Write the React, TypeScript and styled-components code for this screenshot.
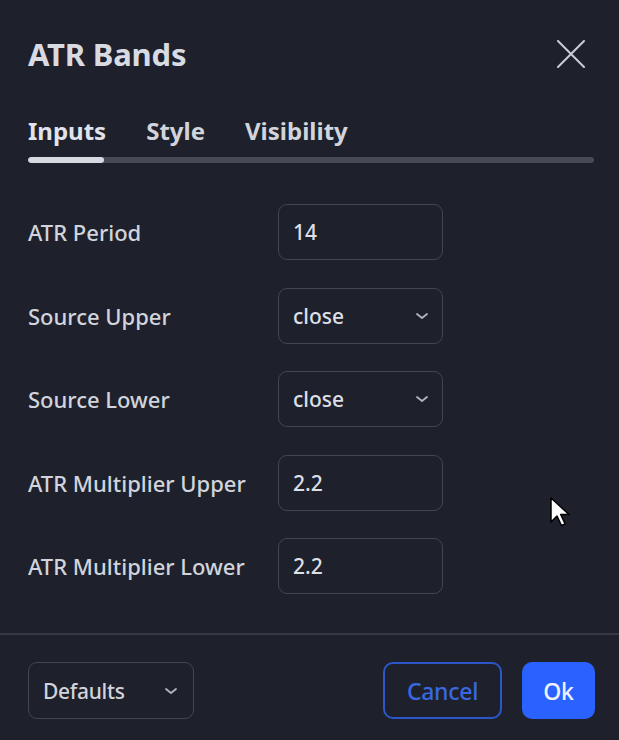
import React from 'react'
import styled, { createGlobalStyle } from 'styled-components'

const GlobalStyle = createGlobalStyle`
  html, body {
    margin: 0;
    padding: 0;
    background: #1e212b;
  }
  * {
    box-sizing: border-box;
  }
`

const Dialog = styled.div`
  position: relative;
  width: 619px;
  height: 740px;
  display: flex;
  flex-direction: column;
  background: #1e212b;
  color: #d1d4dc;
  font-family: 'Noto Sans', Lato, sans-serif;
  overflow: hidden;
`

const Header = styled.div`
  display: flex;
  align-items: center;
  justify-content: space-between;
  height: 36px;
  margin: 36px 33px 0 28px;
`

const Title = styled.h1`
  margin: 0;
  font-size: 31px;
  line-height: 36px;
  font-weight: 700;
  letter-spacing: -0.2px;
  color: #d9dbe2;
`

const CloseButton = styled.button`
  display: flex;
  align-items: center;
  justify-content: center;
  width: 30px;
  height: 30px;
  padding: 0;
  border: none;
  background: transparent;
  color: #c9ccd4;
  cursor: pointer;
`

const Tabs = styled.div`
  display: flex;
  gap: 40px;
  margin: 45px 0 0 28px;
`

const Tab = styled.div<{ $active?: boolean }>`
  font-size: 24px;
  line-height: 28px;
  font-weight: 700;
  color: ${({ $active }) => ($active ? '#e0e3eb' : '#d1d4dc')};
`

const Track = styled.div`
  height: 6px;
  margin: 12px 25px 0 28px;
  border-radius: 3px;
  background: #474a55;
  overflow: hidden;
`

const TrackFill = styled.div`
  height: 100%;
  border-radius: 3px;
  background: #d6d9e0;
`

const Form = styled.div`
  display: flex;
  flex-direction: column;
  gap: 27.5px;
  margin: 41px 0 0 28px;
`

const Row = styled.div`
  display: grid;
  grid-template-columns: 250px 165px;
  align-items: center;
`

const Label = styled.span`
  font-size: 22px;
  line-height: 26px;
  font-weight: 500;
  color: #d1d4dc;
`

const Field = styled.div`
  display: flex;
  align-items: center;
  justify-content: space-between;
  height: 56px;
  padding: 0 13px 0 14px;
  border: 1.5px solid #434651;
  border-radius: 9px;
  font-size: 21px;
  font-weight: 500;
  color: #dcdfe6;
`

const Chevron = styled.svg`
  width: 14px;
  height: 8px;
  color: #b2b5be;
`

const Separator = styled.div`
  height: 2px;
  margin-top: 39px;
  background: #363943;
`

const Footer = styled.div`
  display: flex;
  align-items: center;
  margin: 27px 24px 0 28px;
  gap: 20px;
`

const Spacer = styled.div`
  flex: 1;
`

const DefaultsButton = styled.div`
  display: flex;
  align-items: center;
  justify-content: space-between;
  width: 166px;
  height: 57px;
  padding: 0 15px 0 14px;
  border: 1.5px solid #434651;
  border-radius: 9px;
  font-size: 21px;
  font-weight: 500;
  letter-spacing: -0.3px;
  color: #d1d4dc;
`

const Button = styled.button<{ $primary?: boolean }>`
  height: 57px;
  padding: 0 14px;
  border-radius: 10px;
  font-family: inherit;
  font-size: 23px;
  font-weight: 500;
  letter-spacing: -0.3px;
  cursor: pointer;
  border: 2px solid ${({ $primary }) => ($primary ? '#2962ff' : '#2b57c9')};
  background: ${({ $primary }) => ($primary ? '#2962ff' : 'transparent')};
  color: ${({ $primary }) => ($primary ? '#eef2ff' : '#3a68e0')};
  min-width: ${({ $primary }) => ($primary ? '73px' : '119px')};
`

const Cursor = styled.svg`
  position: absolute;
  left: 549px;
  top: 496px;
  width: 22px;
  height: 32px;
`

const ChevronIcon = () => (
  <Chevron viewBox="0 0 14 8" fill="none">
    <path d="M2 2l5 4 5-4" stroke="currentColor" strokeWidth="1.8" strokeLinecap="round" strokeLinejoin="round" />
  </Chevron>
)

const rows: { label: string; value: string; select?: boolean }[] = [
  { label: 'ATR Period', value: '14' },
  { label: 'Source Upper', value: 'close', select: true },
  { label: 'Source Lower', value: 'close', select: true },
  { label: 'ATR Multiplier Upper', value: '2.2' },
  { label: 'ATR Multiplier Lower', value: '2.2' },
]

export default function App() {
  return (
    <>
      <GlobalStyle />
      <Dialog>
        <Header>
          <Title>ATR Bands</Title>
          <CloseButton aria-label="Close">
            <svg width="28" height="28" viewBox="0 0 28 28" fill="none">
              <path d="M1 1l26 26M27 1L1 27" stroke="currentColor" strokeWidth="2" strokeLinecap="round" />
            </svg>
          </CloseButton>
        </Header>

        <Tabs>
          <Tab $active>Inputs</Tab>
          <Tab>Style</Tab>
          <Tab>Visibility</Tab>
        </Tabs>
        <Track>
          <TrackFill style={{ width: '76px' }} />
        </Track>

        <Form>
          {rows.map((row) => (
            <Row key={row.label}>
              <Label>{row.label}</Label>
              <Field>
                <span>{row.value}</span>
                {row.select && <ChevronIcon />}
              </Field>
            </Row>
          ))}
        </Form>

        <Separator />

        <Footer>
          <DefaultsButton>
            <span>Defaults</span>
            <ChevronIcon />
          </DefaultsButton>
          <Spacer />
          <Button>Cancel</Button>
          <Button $primary>Ok</Button>
        </Footer>

        <Cursor viewBox="0 0 22 32">
          <path
            d="M2 2v24l6-6 4.5 9.5 3.5-1.7-4.3-9.3H20z"
            fill="#ffffff"
            stroke="#000000"
            strokeWidth="1.5"
            strokeLinejoin="round"
          />
        </Cursor>
      </Dialog>
    </>
  )
}
